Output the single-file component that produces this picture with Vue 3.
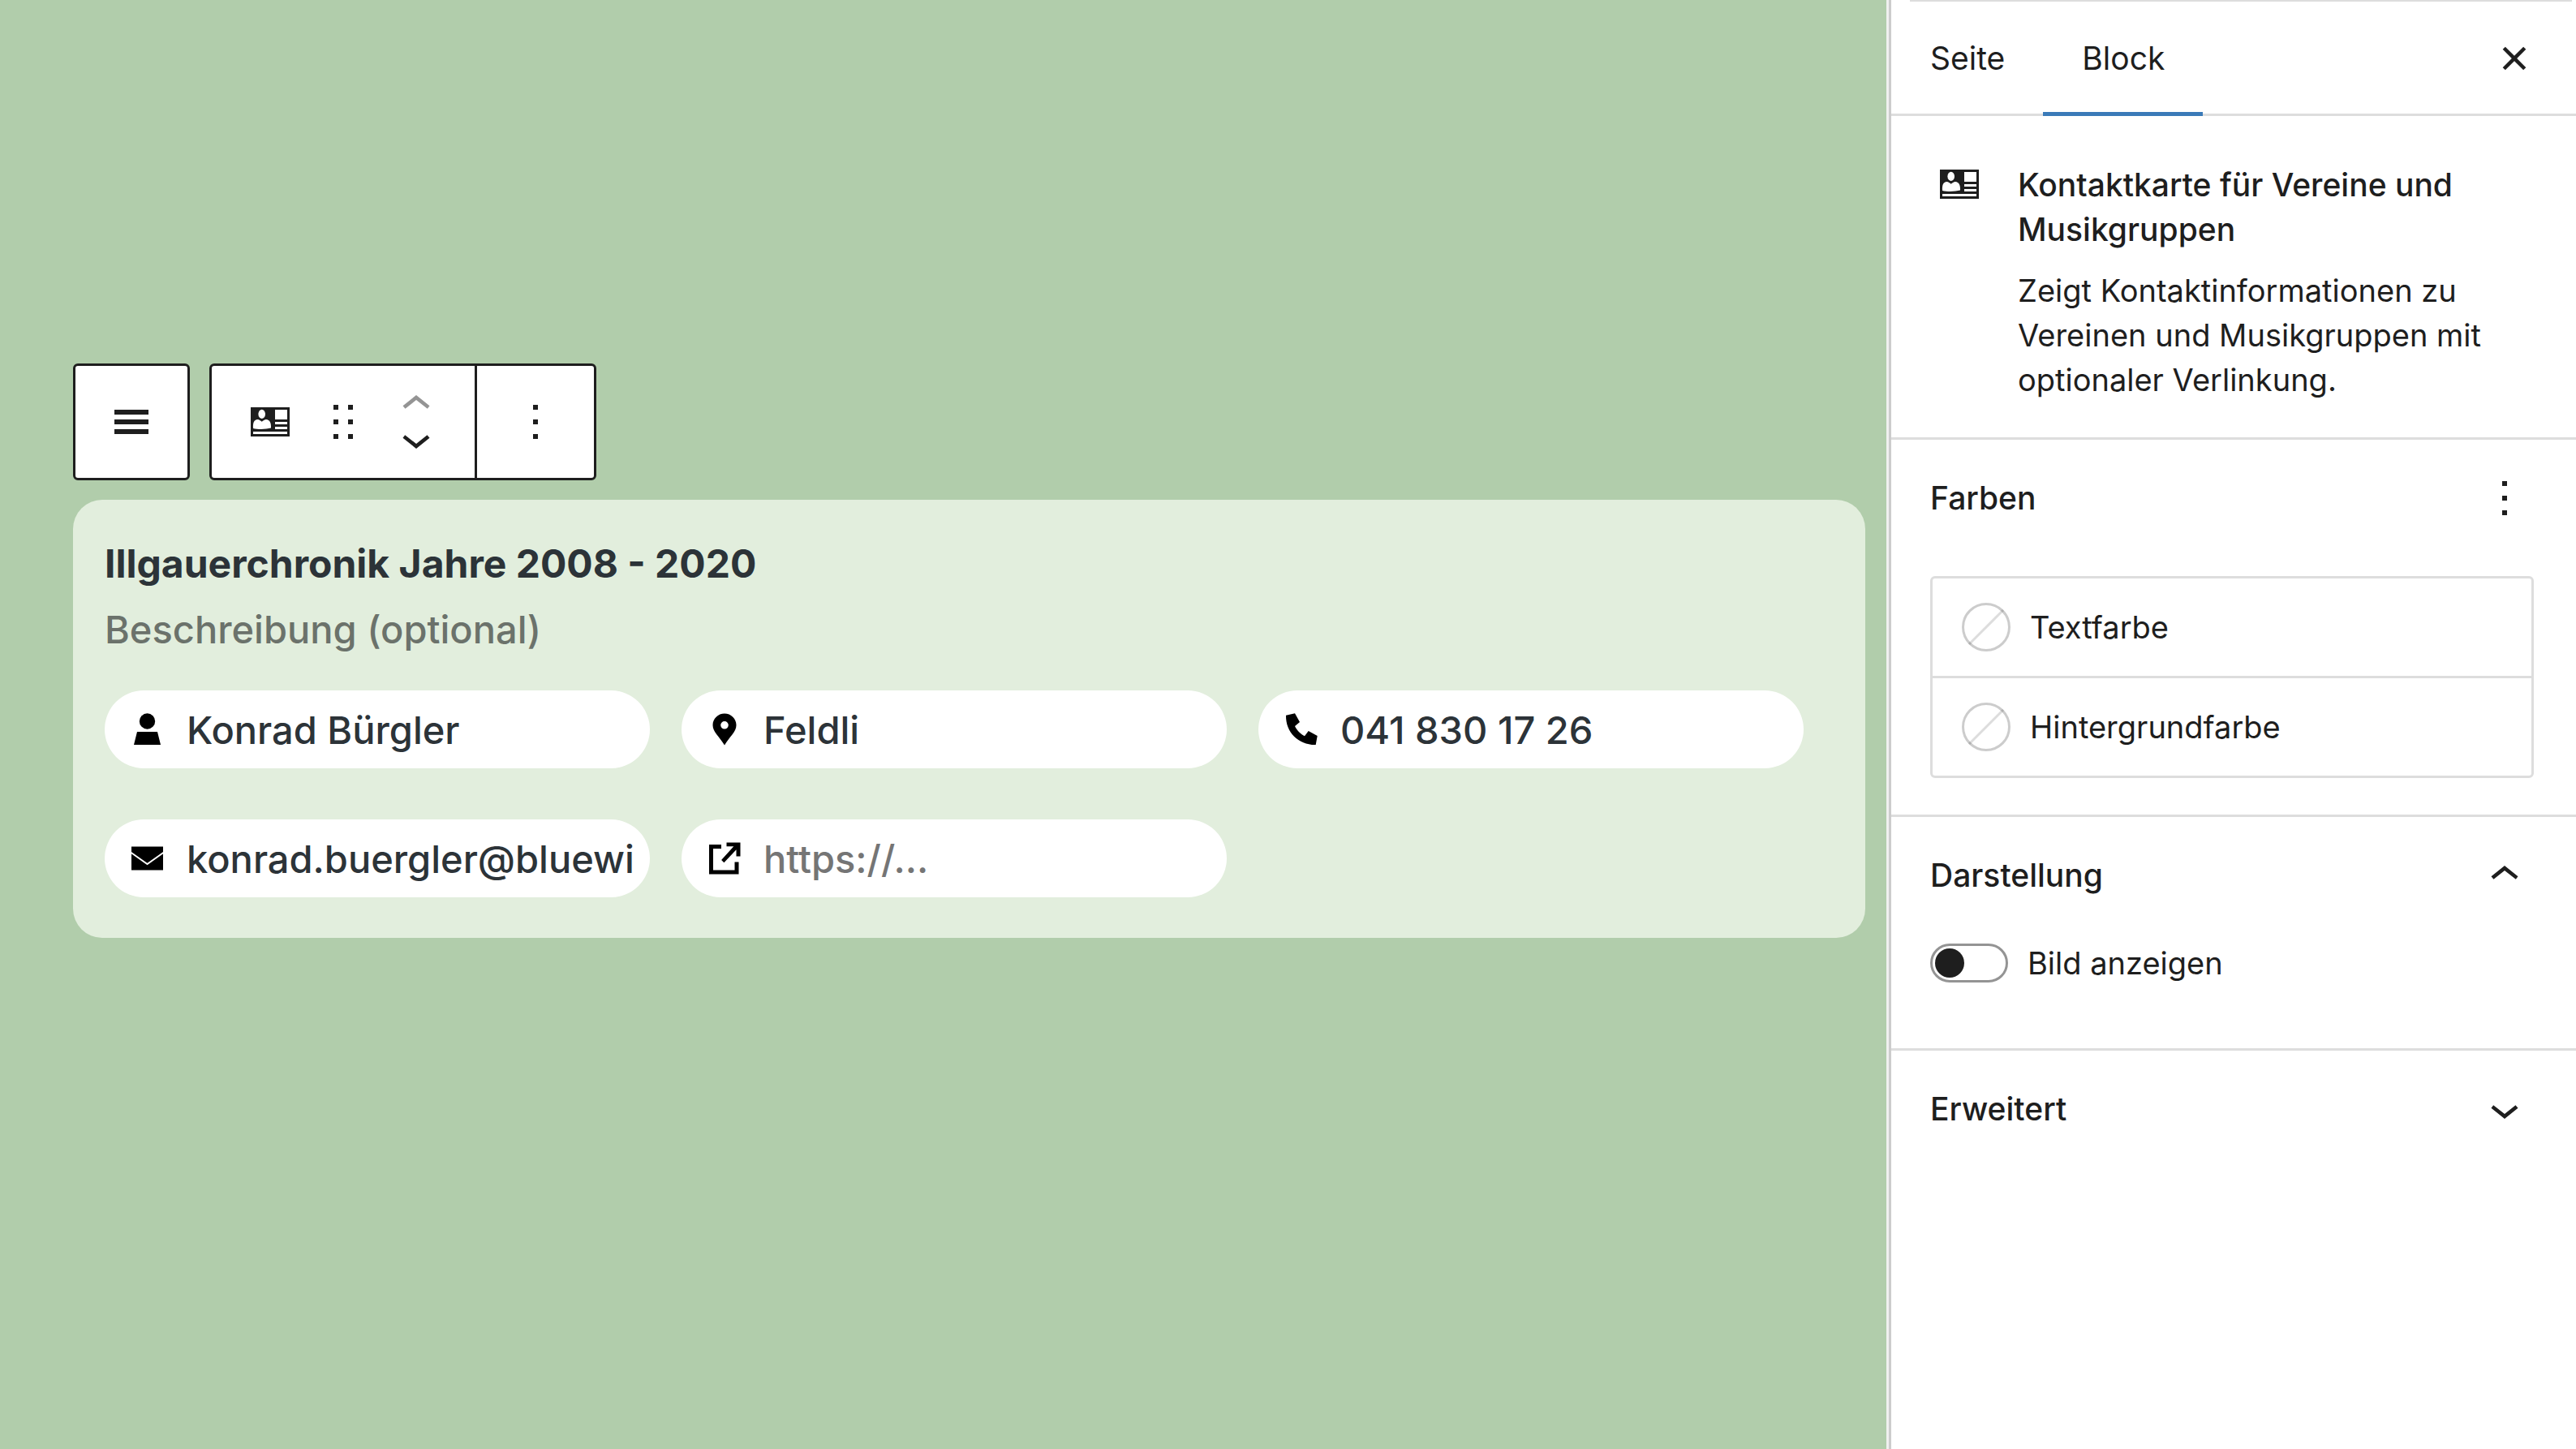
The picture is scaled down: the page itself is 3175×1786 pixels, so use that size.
<script setup>
import { ref } from 'vue'

const title = ref('Illgauerchronik Jahre 2008 - 2020')
const description = ref('')
const showImage = ref(false)

const fields = ref([
  { id: 'person', label: 'Name', type: 'text', value: 'Konrad Bürgler', placeholder: '' },
  { id: 'place', label: 'Ort', type: 'text', value: 'Feldli', placeholder: '' },
  { id: 'phone', label: 'Telefon', type: 'tel', value: '041 830 17 26', placeholder: '' },
  { id: 'mail', label: 'E-Mail', type: 'text', value: 'konrad.buergler@bluewi', placeholder: '' },
  { id: 'link', label: 'Webseite', type: 'url', value: '', placeholder: 'https://...' },
])

const colours = ['Textfarbe', 'Hintergrundfarbe']
</script>

<template>
  <div class="editor">
    <main class="canvas">
      <div class="toolbar" role="toolbar" aria-label="Block-Werkzeuge">
        <div class="tool-group">
          <button class="tool wide" type="button" aria-label="Menü">
            <svg class="icon" viewBox="0 0 72 72"><path d="M15 21h42v6H15zM15 33h42v6H15zM15 45h42v6H15z" /></svg>
          </button>
        </div>
        <div class="tool-group">
          <div class="tool-set">
            <button class="tool" type="button" aria-label="Kontaktkarte">
              <svg class="card-icon" viewBox="0 0 48 36">
                <path d="M0 0h48v36H0z" />
                <path class="cut" d="M30 3h15v12H30zM30 18h15v3H30zM30 24h15v3H30zM3 30h42v3H3z" />
                <ellipse class="cut" cx="13.7" cy="8.4" rx="4.3" ry="5.6" />
                <path class="cut" d="M3 26C2.600 19 4 15.500 8.500 15 10.500 15 12 16.500 13.700 17.800 15.500 16.500 17 15 19 15 23.500 15.500 25.400 19 25 25.600 19 27.300 9 27.500 3 26z" />
              </svg>
            </button>
            <button class="tool" type="button" aria-label="Ziehen">
              <svg class="icon" viewBox="0 0 72 72"><path d="M24 15h6v6h-6zM42 15h6v6h-6zM24 33h6v6h-6zM42 33h6v6h-6zM24 51h6v6h-6zM42 51h6v6h-6z" /></svg>
            </button>
            <div class="movers">
              <button class="mover" type="button" disabled aria-label="Nach oben">
                <svg viewBox="0 5 24 14"><path d="M6.500 12.400L12 8l5.500 4.400-.9 1.200L12 10l-4.500 3.600-1-1.200z" /></svg>
              </button>
              <button class="mover" type="button" aria-label="Nach unten">
                <svg viewBox="0 5 24 14"><path d="M17.500 11.600L12 16l-5.500-4.400.9-1.200L12 14l4.500-3.600 1 1.200z" /></svg>
              </button>
            </div>
          </div>
          <button class="tool wide divided" type="button" aria-label="Optionen">
            <svg class="icon" viewBox="0 0 72 72"><path d="M33 15h6v6h-6zM33 33h6v6h-6zM33 51h6v6h-6z" /></svg>
          </button>
        </div>
      </div>

      <section class="card">
        <input v-model="title" class="card-title" type="text" aria-label="Titel" />
        <input v-model="description" class="card-text" type="text" aria-label="Beschreibung" placeholder="Beschreibung (optional)" />
        <div class="fields">
          <label v-for="field in fields" :key="field.id" class="field">
            <svg class="field-icon" viewBox="0 0 48 48" aria-hidden="true">
              <template v-if="field.id === 'person'">
                <circle cx="23.500" cy="14" r="9.700" />
                <path d="M11 27h25l4 16H7z" />
              </template>
              <path v-else-if="field.id === 'place'" fill-rule="evenodd" d="M24 4.500c8 0 14.500 6.300 14.500 14.200C38.500 27 31 32 24 43.500 17 32 9.500 27 9.500 18.700 9.500 10.800 16 4.500 24 4.500zm0 9.500a4.800 4.800 0 1 0 0 9.600 4.800 4.800 0 1 0 0-9.600z" />
              <path v-else-if="field.id === 'phone'" d="M5 6.700L16 4.300l6 10.700-6 5c2 4.500 7 10 12 12.300l4.700-6.300 11 6-2 11C21 43.500 4.500 28 5 6.700z" />
              <template v-else-if="field.id === 'mail'">
                <path d="M4 9.500h39v29H4z" />
                <path class="flap" d="M3 16.500l20.500 14.500L44 16.500" />
              </template>
              <path v-else d="M5 7h15v5H10v26.500h26.500V28.500h5v15H5zM26.500 4.500h17v17h-5v-8.300L23.400 29.300l-3.300-3.300L35.300 9.300h-8.800z" />
            </svg>
            <input v-model="field.value" class="field-input" :type="field.type" :aria-label="field.label" :placeholder="field.placeholder" />
          </label>
        </div>
      </section>
    </main>

    <aside class="sidebar">
      <header class="tabs">
        <button class="tab" type="button">Seite</button>
        <button class="tab active" type="button">Block</button>
        <button class="close" type="button" aria-label="Schließen">
          <svg class="icon" viewBox="0 0 24 24"><path d="M12 13.060l3.712 3.713 1.061-1.060L13.061 12l3.712-3.712-1.060-1.060L12 10.938 8.288 7.227l-1.061 1.060L10.939 12l-3.712 3.712 1.060 1.061L12 13.061z" /></svg>
        </button>
      </header>

      <section class="about">
        <span class="about-icon">
          <svg class="card-icon" viewBox="0 0 48 36">
            <path d="M0 0h48v36H0z" />
            <path class="cut" d="M30 3h15v12H30zM30 18h15v3H30zM30 24h15v3H30zM3 30h42v3H3z" />
            <ellipse class="cut" cx="13.7" cy="8.4" rx="4.3" ry="5.6" />
            <path class="cut" d="M3 26C2.600 19 4 15.500 8.500 15 10.500 15 12 16.500 13.700 17.800 15.500 16.500 17 15 19 15 23.500 15.500 25.400 19 25 25.600 19 27.300 9 27.500 3 26z" />
          </svg>
        </span>
        <div>
          <h2 class="about-title">Kontaktkarte für Vereine und Musikgruppen</h2>
          <p class="about-text">Zeigt Kontaktinformationen zu Vereinen und Musikgruppen mit optionaler Verlinkung.</p>
        </div>
      </section>

      <section class="panel colours">
        <div class="panel-head">
          <h2 class="panel-title">Farben</h2>
          <button type="button" aria-label="Farb-Optionen">
            <svg class="icon" viewBox="0 0 72 72"><path d="M33 15h6v6h-6zM33 33h6v6h-6zM33 51h6v6h-6z" /></svg>
          </button>
        </div>
        <div class="colour-list">
          <button v-for="name in colours" :key="name" class="colour" type="button">
            <svg class="swatch" viewBox="0 0 60 60" aria-hidden="true">
              <path d="M9 51L51 9" stroke="#ddd" />
              <circle cx="30" cy="30" r="28.500" stroke="#000" stroke-opacity=".2" />
            </svg>
            {{ name }}
          </button>
        </div>
      </section>

      <section class="panel display">
        <button class="panel-head" type="button" aria-expanded="true">
          <span class="panel-title">Darstellung</span>
          <svg class="icon" viewBox="0 0 24 24"><path d="M6.500 12.400L12 8l5.500 4.400-.9 1.200L12 10l-4.500 3.600-1-1.200z" /></svg>
        </button>
        <label class="toggle-row">
          <input v-model="showImage" class="toggle" type="checkbox" role="switch" />
          Bild anzeigen
        </label>
      </section>

      <section class="panel last">
        <button class="panel-head" type="button" aria-expanded="false">
          <span class="panel-title">Erweitert</span>
          <svg class="icon" viewBox="0 0 24 24"><path d="M17.500 11.600L12 16l-5.500-4.400.9-1.200L12 14l4.500-3.600 1 1.200z" /></svg>
        </button>
      </section>
    </aside>
  </div>
</template>

<style>
body {
  margin: 0;
  background: #fff;
}
</style>

<style scoped>
.editor,
.editor * {
  box-sizing: border-box;
}

.editor {
  display: flex;
  min-height: 100vh;
  font-family: Inter, "Liberation Sans", sans-serif;
  font-size: 38px;
  line-height: 55px;
  color: #1e1e1e;
}

button,
input {
  margin: 0;
  padding: 0;
  border: 0;
  background: none;
  font: inherit;
  color: inherit;
}

h2,
p {
  margin: 0;
}

svg {
  display: block;
  flex: none;
  fill: currentColor;
}

.icon {
  width: 72px;
  height: 72px;
}

.card-icon {
  width: 48px;
  height: 36px;
}

.cut {
  fill: #fff;
}

/* Canvas */
.canvas {
  flex: 1;
  min-width: 0;
  padding: 448px 26px 48px 90px;
  background: #b1cdab;
}

.toolbar {
  display: flex;
  gap: 24px;
  margin-bottom: 24px;
}

.tool-group {
  display: flex;
  height: 144px;
  border: 3px solid #1e1e1e;
  border-radius: 6px;
  background: #fff;
}

.tool-set {
  display: flex;
  align-items: center;
  gap: 18px;
  padding: 0 36px;
}

.tool {
  display: flex;
  align-items: center;
  justify-content: center;
  width: 72px;
}

.tool.wide {
  width: 138px;
}

.tool.divided {
  width: 147px;
  border-left: 3px solid #1e1e1e;
}

.mover {
  display: block;
}

.mover svg {
  width: 72px;
  height: 42px;
}

.mover:disabled {
  color: #949494;
}

.card {
  padding: 38px 39px 50px;
  border-radius: 36px;
  background: #e2eedd;
  font-size: 47px;
  font-weight: 500;
  color: #2c3338;
}

.card-title,
.card-text {
  display: block;
  width: 100%;
  height: 81px;
  text-overflow: ellipsis;
}

.card-title {
  font-size: 48px;
  font-weight: 700;
}

.card-text::placeholder {
  color: #6b726b;
  opacity: 1;
}

.fields {
  display: grid;
  grid-template-columns: repeat(auto-fill, 672px);
  gap: 63px 39px;
  margin-top: 35px;
}

.field {
  display: flex;
  align-items: center;
  gap: 24px;
  height: 96px;
  padding: 0 18px 0 29px;
  border-radius: 48px;
  background: #fff;
}

.field-icon {
  width: 48px;
  height: 48px;
  fill: #000;
}

.flap {
  fill: none;
  stroke: #fff;
  stroke-width: 2;
}

.field-input {
  flex: 1;
  min-width: 0;
  height: 96px;
}

.field-input::placeholder {
  color: #757575;
  opacity: 1;
}

/* Sidebar */
.sidebar {
  flex: none;
  width: 850px;
  border-left: 3px solid #f0f0f0;
  box-shadow: inset 3px 0 #ccc;
  padding-left: 3px;
  background: #fff;
}

.tabs {
  display: flex;
  align-items: stretch;
  height: 143px;
  padding-right: 40px;
  border-bottom: 3px solid #ddd;
  background: linear-gradient(#ddd, #ddd) 23px 0 / 816px 2px no-repeat;
}

.tab {
  margin-bottom: -3px;
  padding: 0 47px 0 48px;
  font-size: 39px;
}

.tab.active {
  border-bottom: 5px solid #3a7ab8;
  padding-top: 5px;
}

.close {
  margin: 0 0 -3px auto;
}

.about {
  display: flex;
  gap: 36px;
  padding: 48px 48px 43px;
  border-bottom: 3px solid #ddd;
}

.about-icon {
  display: flex;
  flex: none;
  align-items: center;
  justify-content: center;
  width: 72px;
  height: 72px;
}

.about-title {
  margin: 9px 0 21px;
}

.about-title,
.panel-title {
  font-size: 39px;
  font-weight: 500;
}

.panel {
  padding: 0 52px 0 48px;
  border-bottom: 3px solid #ddd;
}

.panel.last {
  border-bottom: 0;
}

.panel-head {
  display: flex;
  align-items: center;
  justify-content: space-between;
  width: 100%;
  height: 143px;
  text-align: left;
}

.colours {
  padding-bottom: 45px;
}

.colour-list {
  margin-top: 25px;
  border: 3px solid #ddd;
  border-radius: 6px;
}

.colour {
  display: flex;
  align-items: center;
  gap: 24px;
  width: 100%;
  height: 120px;
  padding: 0 36px;
}

.colour + .colour {
  height: 123px;
  border-top: 3px solid #ddd;
}

.swatch {
  width: 60px;
  height: 60px;
  fill: none;
  stroke-width: 3;
}

.display {
  padding-bottom: 77px;
}

.toggle-row {
  display: flex;
  align-items: center;
  gap: 24px;
  height: 65px;
  padding-top: 9px;
}

.toggle {
  appearance: none;
  display: flex;
  align-items: center;
  width: 96px;
  height: 48px;
  padding: 0 3px;
  border: 3px solid #949494;
  border-radius: 24px;
  background: #fff;
}

.toggle::before {
  content: "";
  width: 36px;
  height: 36px;
  border-radius: 50%;
  background: #1e1e1e;
}

.toggle:checked {
  justify-content: flex-end;
}
</style>
